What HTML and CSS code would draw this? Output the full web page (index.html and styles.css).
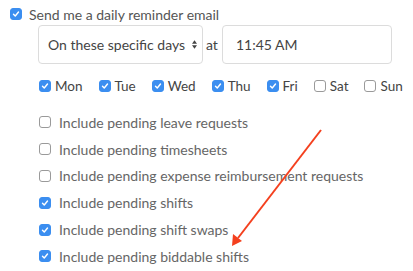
FILE: index.html
```html
<!DOCTYPE html>
<html lang="en">
<head>
    <meta charset="UTF-8">
    <title>Reminder settings</title>
    <link rel="stylesheet" href="styles.css">
</head>
<body>

    <div class="panel">
        <label class="reminder">
            <span class="box checked"><svg viewBox="0 0 12 12"><path d="M3 6.3 L5.1 8.4 L9 3.6"/></svg></span>
            Send me a daily reminder email
        </label>

        <div class="schedule">
            <div class="select">
                <span>On these specific days</span>
                <svg class="spin" viewBox="0 0 6 10"><path d="M3 0 L6 4 L0 4 Z M0 6 L6 6 L3 10 Z"/></svg>
            </div>
            <span class="at">at</span>
            <div class="time">11:45 AM</div>
        </div>

        <div class="days">
            <label class="day"><span class="box checked"><svg viewBox="0 0 12 12"><path d="M3 6.3 L5.1 8.4 L9 3.6"/></svg></span>Mon</label>
            <label class="day"><span class="box checked"><svg viewBox="0 0 12 12"><path d="M3 6.3 L5.1 8.4 L9 3.6"/></svg></span>Tue</label>
            <label class="day"><span class="box checked"><svg viewBox="0 0 12 12"><path d="M3 6.3 L5.1 8.4 L9 3.6"/></svg></span>Wed</label>
            <label class="day"><span class="box checked"><svg viewBox="0 0 12 12"><path d="M3 6.3 L5.1 8.4 L9 3.6"/></svg></span>Thu</label>
            <label class="day"><span class="box checked"><svg viewBox="0 0 12 12"><path d="M3 6.3 L5.1 8.4 L9 3.6"/></svg></span>Fri</label>
            <label class="day"><span class="box"></span>Sat</label>
            <label class="day"><span class="box"></span>Sun</label>
        </div>

        <div class="options">
            <label class="option"><span class="box"></span>Include pending leave requests</label>
            <label class="option"><span class="box"></span>Include pending timesheets</label>
            <label class="option"><span class="box"></span>Include pending expense reimbursement requests</label>
            <label class="option"><span class="box checked"><svg viewBox="0 0 12 12"><path d="M3 6.3 L5.1 8.4 L9 3.6"/></svg></span>Include pending shifts</label>
            <label class="option"><span class="box checked"><svg viewBox="0 0 12 12"><path d="M3 6.3 L5.1 8.4 L9 3.6"/></svg></span>Include pending shift swaps</label>
            <label class="option"><span class="box checked"><svg viewBox="0 0 12 12"><path d="M3 6.3 L5.1 8.4 L9 3.6"/></svg></span>Include pending biddable shifts</label>
        </div>
    </div>

    <!-- annotation arrow drawn over the list -->
    <svg class="arrow" width="413" height="271" viewBox="0 0 413 271">
        <line x1="321" y1="130" x2="238" y2="238" stroke="#f4401e" stroke-width="2"/>
        <path d="M232 246 L233 234 L242 241 Z" fill="#f4401e"/>
    </svg>

</body>
</html>
```

FILE: styles.css
```css
* {
    margin: 0;
    padding: 0;
    box-sizing: border-box;
}

body {
    font-family: Lato, "Open Sans", Arial, sans-serif;
    font-size: 14px;
    color: #555;
    background-color: #fff;
    width: 413px;
    height: 271px;
    overflow: hidden;
    position: relative;
}

.panel {
    padding: 8px 0 0 10px;
}

.box {
    width: 12px;
    height: 12px;
    border: 1px solid #9a9a9a;
    border-radius: 3px;
    background-color: #fff;
    flex: none;
    display: flex;
}

.box.checked {
    background-color: #3b8ef0;
    border-color: #3b8ef0;
}

.box svg {
    width: 100%;
    height: 100%;
}

.box path {
    fill: none;
    stroke: #fff;
    stroke-width: 1.7;
    stroke-linecap: round;
    stroke-linejoin: round;
}

.reminder {
    display: flex;
    align-items: center;
    gap: 7px;
    height: 12px;
}

.schedule {
    display: flex;
    align-items: center;
    margin: 5px 0 0 28px;
    height: 39px;
}

.select {
    width: 165px;
    height: 39px;
    border: 1px solid #dcdcdc;
    border-radius: 4px;
    display: flex;
    align-items: center;
    justify-content: space-between;
    padding: 0 5px 0 9px;
    color: #444;
}

.spin {
    width: 5px;
    height: 9px;
    fill: #444;
}

.at {
    width: 19px;
    padding-left: 3px;
    color: #444;
}

.time {
    width: 170px;
    height: 39px;
    border: 1px solid #dcdcdc;
    border-radius: 4px;
    display: flex;
    align-items: center;
    padding-left: 13px;
    color: #444;
}

.days {
    display: flex;
    gap: 16px;
    margin: 16px 0 0 29px;
    height: 12px;
    align-items: center;
    font-size: 13.5px;
}

.day {
    display: flex;
    align-items: center;
    gap: 4px;
    color: #444;
}

.options {
    margin: 17px 0 0 29px;
}

.option {
    display: flex;
    align-items: center;
    gap: 8px;
    height: 26.8px;
    color: #666;
}

.arrow {
    position: absolute;
    left: 0;
    top: 0;
}
```
